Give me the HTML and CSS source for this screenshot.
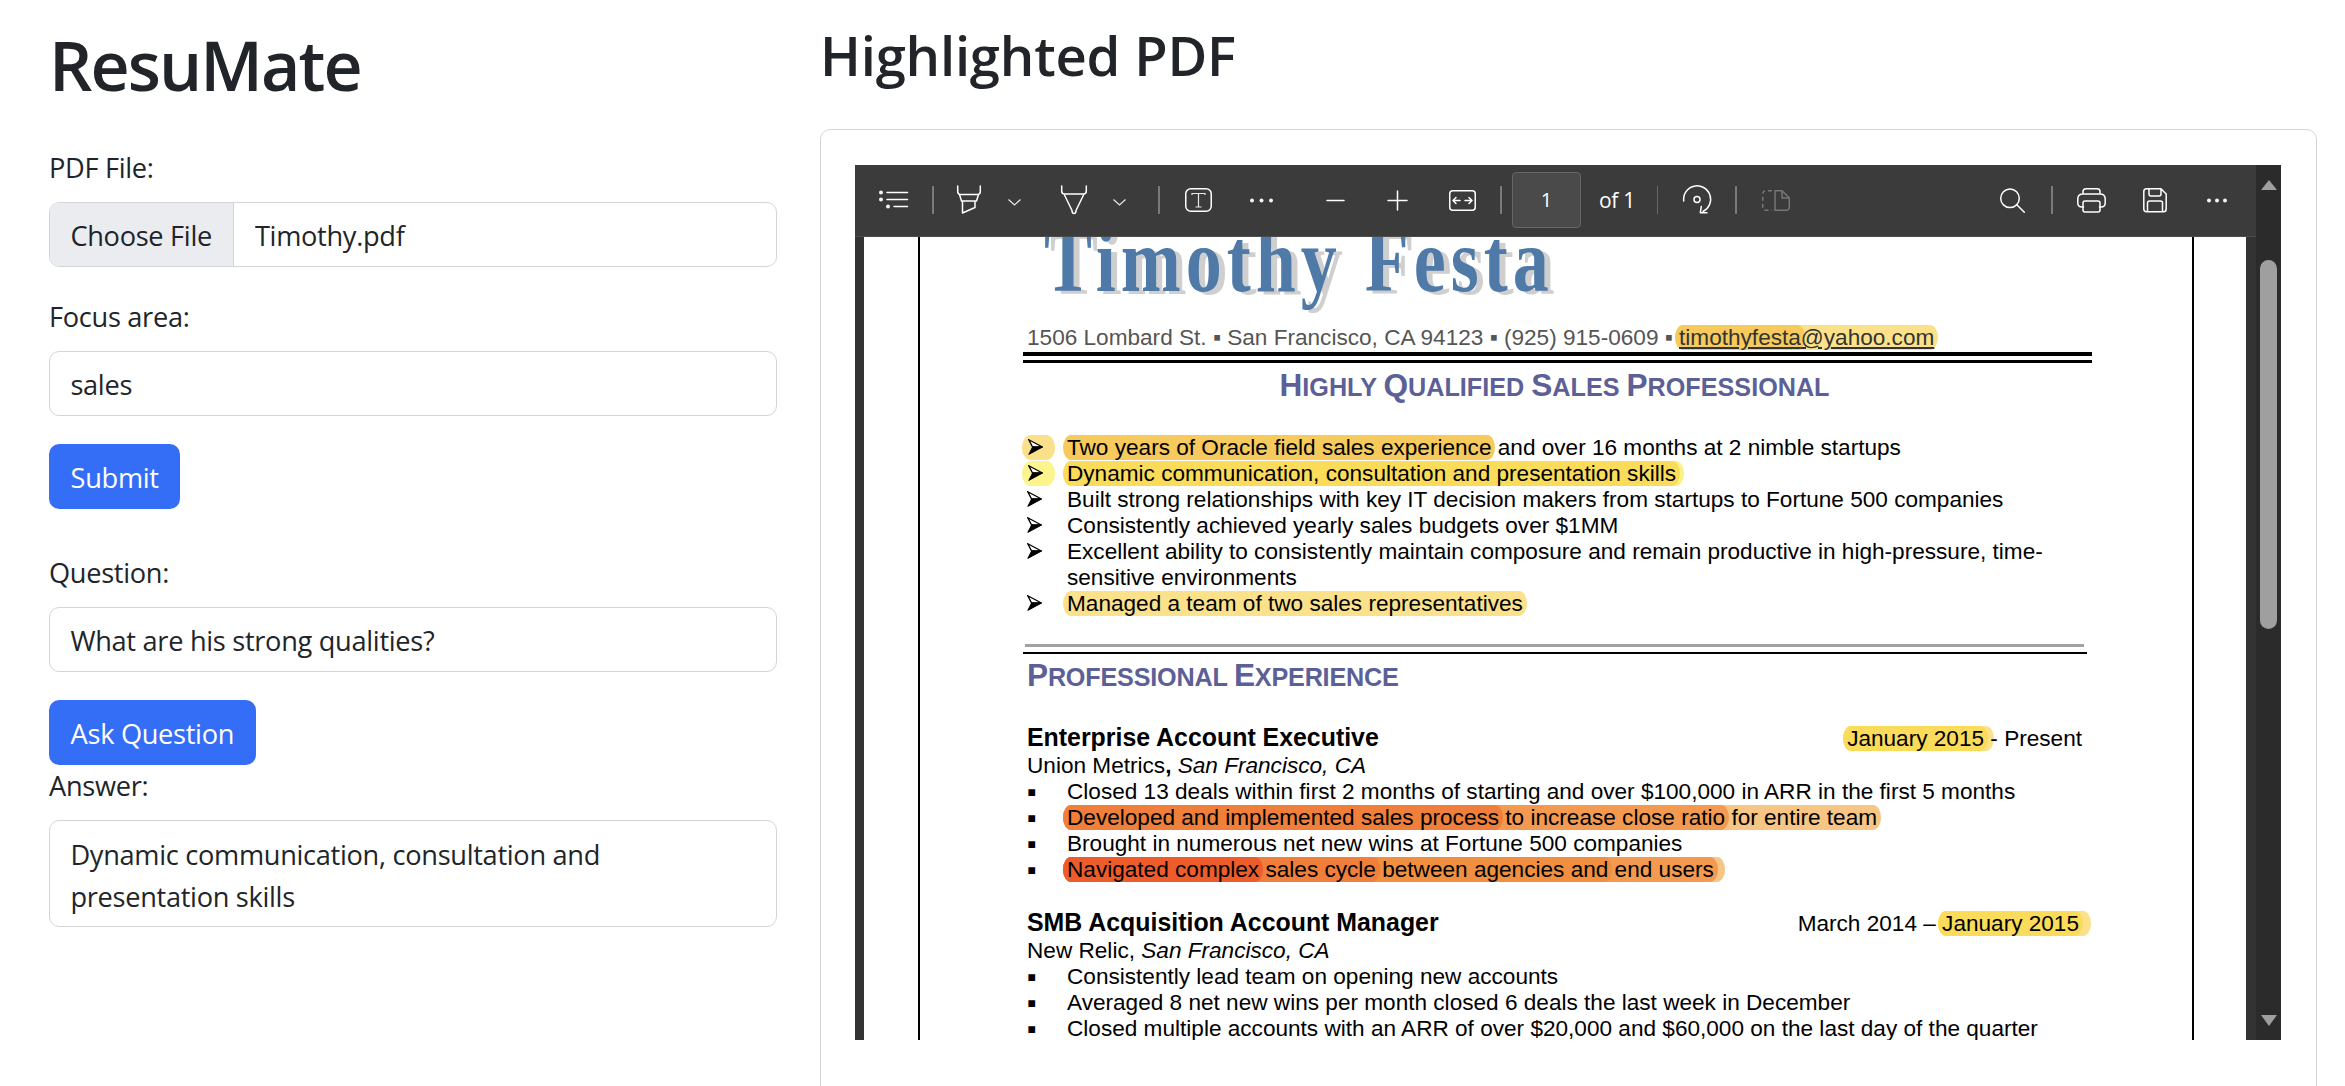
FILE: index.html
```html
<!DOCTYPE html>
<html lang="en">
<head>
<meta charset="utf-8">
<title>ResuMate</title>
<link rel="stylesheet" href="styles.css">
</head>
<body>
<svg class="defs" width="0" height="0" aria-hidden="true"><symbol id="arrow-bullet" viewBox="0 0 15 16"><path class="arrow-top" d="M.8.8L14.4 8H4.6Z"/><path class="arrow-low" d="M14.6 8L.8 15.4L4.6 8Z"/></symbol></svg>
<main class="app">
  <section class="side">
    <h1 class="title">ResuMate</h1>
    <div class="label first">PDF File:</div>
    <div class="file"><span class="file-btn">Choose File</span><span class="file-name">Timothy.pdf</span></div>
    <div class="label gap">Focus area:</div>
    <input class="field" type="text" value="sales">
    <button class="btn gap" type="button">Submit</button>
    <div class="label first">Question:</div>
    <input class="field" type="text" value="What are his strong qualities?">
    <button class="btn gap" type="button">Ask Question</button>
    <div class="label shifted">Answer:</div>
    <div class="answer">Dynamic communication, consultation and presentation skills</div>
  </section>
  <section class="main">
    <h2 class="subtitle">Highlighted PDF</h2>
    <div class="card">
      <div class="viewer">
        <div class="viewer-body">
          <div class="toolbar">
            <svg class="ic m24" width="29" height="20" viewBox="0 0 29 20"><g class="wh"><path d="M8 2.5H28.5M8 9.5H28.5M15 16.5H28.5"/></g><circle class="dot" cx="2" cy="2.5" r="2"/><circle class="dot" cx="2" cy="9.5" r="2"/><circle class="dot" cx="9" cy="16.5" r="2"/></svg>
            <span class="sep m24"></span>
            <svg class="ic m23" width="24" height="28" viewBox="0 0 24 28"><path class="wh" d="M.7 0V5.5Q.7 8.5 3.5 8.5H20.5Q23.3 8.5 23.3 5.5V0M2.5 8.5L4.5 15H19.5L21.5 8.5M5.5 15V27L18 21.5V15"/></svg>
            <svg class="ic chev m27" width="13" height="7" viewBox="0 0 13 7"><path class="thin" d="M.5.5L6.5 6L12.5.5"/></svg>
            <svg class="ic m40" width="26" height="28" viewBox="0 0 26 28"><path class="wh" d="M.7 0V5Q.7 8 3.5 8H22.5Q25.3 8 25.3 5V0M3 8L11 24.5M23 8L15 24.5M11 24.5Q11 27.5 13 27.5T15 24.5"/></svg>
            <svg class="ic chev m26" width="13" height="7" viewBox="0 0 13 7"><path class="thin" d="M.5.5L6.5 6L12.5.5"/></svg>
            <span class="sep m32"></span>
            <svg class="ic m25" width="27" height="24" viewBox="0 0 27 24"><rect class="wh" x=".75" y=".75" width="25.5" height="22.5" rx="5"/><path class="thin" d="M7 7V5.5H20V7M13.5 5.5V19M10.5 19H16.5"/></svg>
            <svg class="ic m38" width="23" height="5" viewBox="0 0 23 5"><circle class="dot" cx="2" cy="2.5" r="2"/><circle class="dot" cx="11.5" cy="2.5" r="2"/><circle class="dot" cx="21" cy="2.5" r="2"/></svg>
            <svg class="ic m54" width="17" height="3" viewBox="0 0 17 3"><path class="wh" d="M0 1.5H17"/></svg>
            <svg class="ic m44" width="19" height="19" viewBox="0 0 19 19"><path class="wh" d="M0 9.5H19M9.5 0V19"/></svg>
            <svg class="ic m42" width="27" height="21" viewBox="0 0 27 21"><rect class="wh" x=".75" y=".75" width="25.5" height="19.5" rx="3"/><path class="wh" d="M4 10.5H11M7 7.5L4 10.5L7 13.5M16 10.5H23M20 7.5L23 10.5L20 13.5"/></svg>
            <span class="sep m24"></span>
            <span class="page-box m10">1</span>
            <span class="page-of m18">of 1</span>
            <span class="sep thin-sep m21"></span>
            <svg class="ic m25" width="28" height="28" viewBox="0 0 28 28"><path class="wh" d="M.7 15A13.5 13.5 0 1 1 20 25.5M18.3 20.5L17.3 26.7H24"/><circle class="wh" cx="14" cy="13.5" r="3"/></svg>
            <span class="sep m24"></span>
            <svg class="ic m25" width="28" height="21" viewBox="0 0 28 21"><path class="dim dash" d="M10 .7H4Q.7.7.7 4V17Q.7 20.3 4 20.3H10"/><path class="dim" d="M13 .7H20L27.3 8V17Q27.3 20.3 24 20.3H13ZM20 .7V8H27.3"/></svg>
            <svg class="ic m-auto" width="25" height="25" viewBox="0 0 25 25"><circle class="wh" cx="10" cy="10.3" r="9.3"/><path class="wh" d="M16.8 16.8L24.3 24.3"/></svg>
            <span class="sep m26"></span>
            <svg class="ic m24" width="29" height="25" viewBox="0 0 29 25"><path class="wh" d="M6 6V3.5Q6 .8 9 .8H20Q23 .8 23 3.5V6M6.5 19H5Q.8 19 .8 15V11Q.8 6 6 6H23Q28.2 6 28.2 11V15Q28.2 19 24 19H22.5"/><rect class="wh" x="6" y="13" width="17" height="11" rx="2"/></svg>
            <svg class="ic m37" width="24" height="25" viewBox="0 0 24 25"><path class="wh" d="M.8 3.5Q.8.8 3.5.8H18L23.2 6V21Q23.2 23.8 20.5 23.8H3.5Q.8 23.8.8 21ZM6 .8V6Q6 8 8 8H16Q18 8 18 6V.8M4.5 23.8V15Q4.5 13 6.5 13H17.5Q19.5 13 19.5 15V23.8"/></svg>
            <svg class="ic m40" width="20" height="5" viewBox="0 0 20 5"><circle class="dot" cx="2" cy="2.5" r="2"/><circle class="dot" cx="10" cy="2.5" r="2"/><circle class="dot" cx="18" cy="2.5" r="2"/></svg>
          </div>
          <div class="doc">
            <div class="sheet">
              <div class="name">Timothy Festa</div>
              <div class="line address">1506 Lombard St. ▪ San Francisco, CA 94123 ▪ (925) 915-0609 ▪ <span class="hl y-soft mail"><span class="hl y-warm">timothyfesta</span>@yahoo.com</span></div>
              <div class="rule-double"></div>
              <div class="headline"><span class="cap">H</span>ighly <span class="cap">Q</span>ualified <span class="cap">S</span>ales <span class="cap">P</span>rofessional</div>
              <div class="list">
                <div class="item"><span class="mark"><span class="mark-hl m-warm"><svg class="arrow-ic" width="15" height="16"><use href="#arrow-bullet"/></svg></span></span><span><span class="hl y-warm">Two years of Oracle field sales experience</span> and over 16 months at 2 nimble startups</span></div>
                <div class="item"><span class="mark"><span class="mark-hl m-pale"><svg class="arrow-ic" width="15" height="16"><use href="#arrow-bullet"/></svg></span></span><span class="hl y-pale"><span class="hl y-gold">Dynamic communication, consultation and presentation skills</span></span></div>
                <div class="item"><span class="mark"><svg class="arrow-ic" width="15" height="16"><use href="#arrow-bullet"/></svg></span>Built strong relationships with key IT decision makers from startups to Fortune 500 companies</div>
                <div class="item"><span class="mark"><svg class="arrow-ic" width="15" height="16"><use href="#arrow-bullet"/></svg></span>Consistently achieved yearly sales budgets over $1MM</div>
                <div class="item"><span class="mark"><svg class="arrow-ic" width="15" height="16"><use href="#arrow-bullet"/></svg></span><span>Excellent ability to consistently maintain composure and remain productive in high-pressure, time-<br>sensitive environments</span></div>
                <div class="item"><span class="mark"><svg class="arrow-ic" width="15" height="16"><use href="#arrow-bullet"/></svg></span><span class="hl y-soft">Managed a team of two sales representatives</span></div>
              </div>
              <div class="rule-pair"></div>
              <div class="section"><span class="cap">P</span>rofessional <span class="cap">E</span>xperience</div>
              <div class="job first-job"><b>Enterprise Account Executive</b><span><span class="hl y-soft"><span class="hl y-gold">January 2015</span> </span>- Present</span></div>
              <div class="line">Union Metrics<b>,</b> <i>San Francisco, CA</i></div>
              <div class="item"><span class="mark sq">▪</span>Closed 13 deals within first 2 months of starting and over $100,000 in ARR in the first 5 months</div>
              <div class="item"><span class="mark sq">▪</span><span class="hl o-pale"><span class="hl o-mid"><span class="hl o-deep">Developed and implemented sales process</span> to increase close ratio</span> for entire team</span></div>
              <div class="item"><span class="mark sq">▪</span>Brought in numerous net new wins at Fortune 500 companies</div>
              <div class="item"><span class="mark sq">▪</span><span class="hl o-pale ext"><span class="hl o-mid"><span class="hl o-amber"><span class="hl o-deep"><span class="hl o-red">Navigated complex</span> sales cycle</span> between agencies and</span> end users</span></span></div>
              <div class="job second-job"><b>SMB Acquisition Account Manager</b><span>March 2014 – <span class="hl y-soft date-end"><span class="hl y-gold">January 2015</span></span></span></div>
              <div class="line">New Relic, <i>San Francisco, CA</i></div>
              <div class="item"><span class="mark sq">▪</span>Consistently lead team on opening new accounts</div>
              <div class="item"><span class="mark sq">▪</span>Averaged 8 net new wins per month closed 6 deals the last week in December</div>
              <div class="item"><span class="mark sq">▪</span>Closed multiple accounts with an ARR of over $20,000 and $60,000 on the last day of the quarter</div>
            </div>
          </div>
        </div>
        <div class="scrollbar">
          <span class="arrow-up"></span>
          <span class="thumb"></span>
          <span class="arrow-down"></span>
        </div>
      </div>
    </div>
  </section>
</main>
</body>
</html>
```
FILE: styles.css
```css
* { box-sizing: border-box; }
html, body { margin: 0; height: 100%; overflow: hidden; background: #fff; }
body { font-family: "Open Sans", "Noto Sans", sans-serif; font-size: 27.2px; line-height: 40.8px; color: #212529; }
.defs { position: absolute; }

.app { display: grid; grid-template-columns: 728px 1497px; column-gap: 43px; padding: 0 0 0 49px; }

.side { padding-top: 24px; display: flex; flex-direction: column; align-items: flex-start; }
.title { margin: 0 0 42px; font-size: 68px; line-height: 81.6px; font-weight: 600; letter-spacing: -1.9px; }
.label { margin-bottom: 13.6px; letter-spacing: -.3px; }
.label.gap { margin-top: 30.4px; margin-bottom: 12.6px; }
.label.first { margin-top: 0; }
.btn + .label.first { margin-top: 44px; margin-bottom: 12.6px; }
.label.shifted { margin-top: 1px; margin-bottom: 12.6px; }
.field, .answer, .file { width: 100%; border: 1.7px solid #d3d4d8; border-radius: 10.2px; background: #fff; }
.field { height: 65px; padding: 3px 20.4px 0; font: inherit; color: #212529; letter-spacing: -.3px; outline: none; }
.file { height: 65px; display: flex; overflow: hidden; letter-spacing: -.3px; }
.file-btn { display: flex; align-items: center; padding: 3px 21px 0 20.4px; background: #ebecf0; border-right: 1.7px solid #d3d4d8; }
.file-name { display: flex; align-items: center; padding: 3px 0 0 21px; }
.btn { height: 65px; padding: 3px 21.6px 0; border: 0; border-radius: 10.2px; background: #356ef6; color: #fff; font: inherit; letter-spacing: -.3px; }
.btn.gap { margin-top: 28.5px; }
.answer { height: 107px; padding: 13px 20.4px 0; line-height: 42px; letter-spacing: -.3px; }

.subtitle { margin: 0; padding-top: 23px; height: 129px; font-size: 54.4px; line-height: 65px; font-weight: 600; letter-spacing: -.2px; }
.card { border: 1.7px solid #d3d4d8; border-radius: 10.2px; padding: 34.6px 34px 80px; }

.viewer { height: 875px; display: flex; background: #2b2b2b; width: 1426px; }
.viewer-body { width: 1401px; display: flex; flex-direction: column; background: #333; }
.toolbar { flex: none; height: 72px; display: flex; align-items: center; background: #3b3b3b; border-bottom: 1px solid #4c4c4c; position: relative; z-index: 1; }

.ic { flex: none; display: block; overflow: visible; }
.wh { fill: none; stroke: #fff; stroke-width: 1.5; stroke-linecap: round; stroke-linejoin: round; }
.thin { fill: none; stroke: #e8e8e8; stroke-width: 1.2; }
.dot { fill: #f4f4f4; }
.dim { fill: none; stroke: #767676; stroke-width: 1.5; stroke-linejoin: round; }
.dash { stroke-dasharray: 4 3; }
.chev { margin-top: 4px; }
.sep { flex: none; width: 2px; height: 28px; background: #7a7a7a; }
.thin-sep { width: 1px; background: #666; }
.m10 { margin-left: 10px; } .m18 { margin-left: 18px; } .m21 { margin-left: 21px; }
.m23 { margin-left: 23px; } .m24 { margin-left: 24px; } .m25 { margin-left: 25px; }
.m26 { margin-left: 26px; } .m27 { margin-left: 27px; } .m32 { margin-left: 32px; }
.m37 { margin-left: 37px; } .m38 { margin-left: 38px; } .m40 { margin-left: 40px; }
.m42 { margin-left: 42px; } .m44 { margin-left: 44px; } .m54 { margin-left: 54px; }
.m-auto { margin-left: auto; }
.toolbar > :last-child { margin-right: 29px; }
.page-box { flex: none; width: 69px; height: 56px; display: flex; align-items: center; justify-content: center; background: #4a4a4a; border: 1px solid #666; border-radius: 4px; color: #fff; font-size: 20px; line-height: 1; }
.page-of { flex: none; width: 37px; color: #fff; font-size: 21px; letter-spacing: -.3px; white-space: nowrap; }

.doc { flex: 1; min-height: 0; overflow: hidden; margin: 0 10px 0 9px; background: #fff; }
.sheet { display: flow-root; height: 100%; margin: 0 52px 0 54px; padding: 0 110px 0 107px; border-left: 2px solid #000; border-right: 2px solid #000; font-family: "Liberation Sans", Arial, sans-serif; font-size: 22.6px; line-height: 26px; color: #000; white-space: nowrap; }

.name { margin-top: -5.6px; height: 72px; padding-left: 17px; font-family: "Liberation Serif", "Times New Roman", serif; font-weight: 700; font-size: 72px; line-height: 72px; letter-spacing: 5px; color: #4f7aa8; text-shadow: 6px 2.5px 0 #cfcfcf; transform: scaleY(1.25); transform-origin: 50% 60.3px; }
.line { height: 26px; }
.address { margin-top: 22.1px; color: #555; }
.mail, .mail .hl { color: #333; text-decoration: underline; }
.rule-double { margin: 1.4px -10px 0 -4px; height: 11px; border-top: 4px solid #000; border-bottom: 3px solid #000; }
.headline, .section { height: 30px; line-height: 30px; font-weight: 700; font-size: 25.2px; text-transform: uppercase; color: #5d5f97; }
.cap { font-size: 31.6px; }
.headline { margin-top: 6.6px; text-align: center; }
.list { margin-top: 35px; }
.item { display: flex; min-height: 26px; }
.mark { flex: none; width: 40px; }
.sq { font-size: 27px; }
.arrow-ic { display: block; flex: none; margin-top: 4px; }
.arrow-top { fill: #fff; stroke: #000; stroke-width: 1.3; stroke-linejoin: miter; }
.arrow-low { fill: #000; stroke: #000; stroke-width: 1; }
.mark-hl { display: flex; width: 32.5px; height: 25px; margin-left: -5px; padding-left: 5.5px; border-radius: 9px / 12px; }
.m-warm { background: #fae08a; }
.m-pale { background: #fdf48d; }
.m-warm .arrow-top { fill: #fae08a; }

.hl { display: inline-block; height: 25px; line-height: 25px; margin: 0 -4px; padding: 0 4px; border-radius: 8px / 12.5px; white-space: pre; }
.y-warm { background: #f6ca5c; }
.y-soft { background: #fbe18a; }
.y-gold { background: #fbdc5a; }
.y-pale { background: #fcf087; padding-right: 8px; margin-right: -8px; }
.date-end { padding-right: 12px; margin-right: -12px; }
.o-pale { background: #f7c584; }
.o-mid { background: #f39a50; }
.o-amber { background: #f08f3f; }
.o-deep { background: #ef7f3a; }
.o-red { background: #ee5c2b; }
.ext { padding-right: 11px; margin-right: -11px; }

.rule-pair { margin: 27.4px -5px 0 -4px; height: 10px; border-bottom: 2px solid #000; }
.rule-pair::before { content: ""; display: block; height: 3px; margin: 0 3px 0 2px; background: #a2a2a2; }
.section { margin-top: 5.6px; letter-spacing: -.2px; }
.job { display: flex; justify-content: space-between; align-items: baseline; height: 30px; line-height: 28px; }
.job b { font-size: 24.9px; }
.first-job { margin-top: 32.6px; }
.second-job { margin-top: 26.5px; height: 29px; line-height: 26px; padding-right: 3px; }

.scrollbar { flex: 1; display: flex; flex-direction: column; align-items: center; }
.arrow-up { margin-top: 15px; width: 0; height: 0; border: 8px solid transparent; border-top: 0; border-bottom: 10px solid #9f9f9f; }
.thumb { margin-top: 70px; width: 17px; height: 369px; border-radius: 8.5px; background: #9f9f9f; }
.arrow-down { margin-top: auto; margin-bottom: 14px; width: 0; height: 0; border: 8px solid transparent; border-bottom: 0; border-top: 11px solid #9f9f9f; }
```
